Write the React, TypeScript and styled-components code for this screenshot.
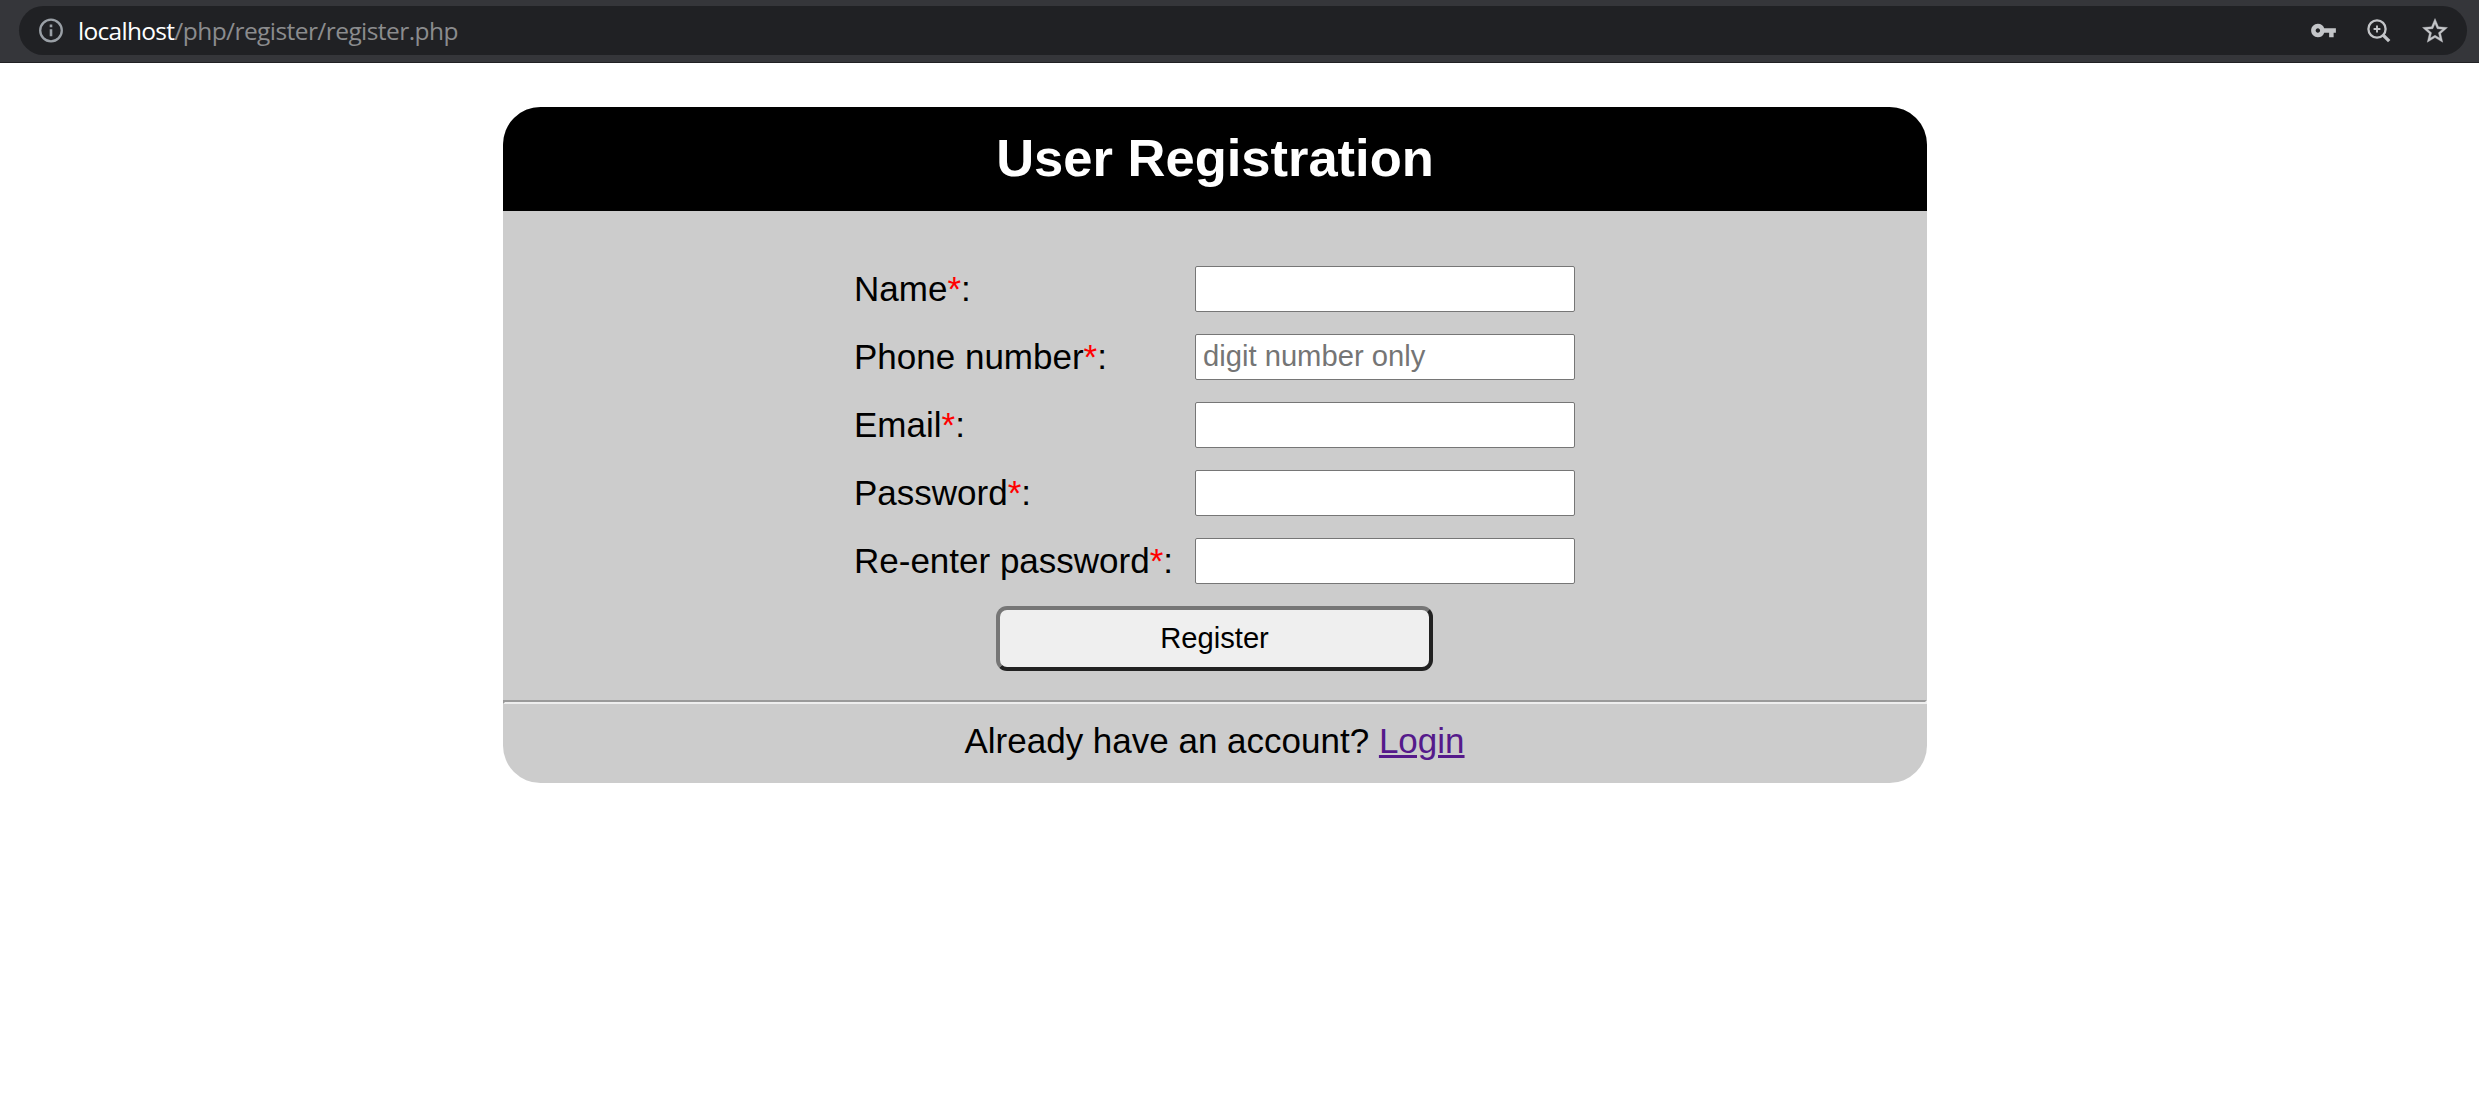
import React from "react";
import styled, { createGlobalStyle } from "styled-components";
import { MdVpnKey } from "react-icons/md";

const GlobalStyle = createGlobalStyle`
  body {
    margin: 0;
    background: #fff;
    color: #000;
    font-family: "Liberation Sans", Arial, sans-serif;
  }
  *, *::before, *::after { box-sizing: border-box; }
`;

const BrowserBar = styled.header`
  height: 63px;
  padding: 6px 12px 0 19px;
  background: #35363a;
  border-bottom: 1px solid #202124;
`;

const AddressField = styled.div`
  display: flex;
  align-items: center;
  height: 49px;
  padding: 0 17px 0 20px;
  border-radius: 25px;
  background: #202124;
  color: #9aa0a6;
`;

const Url = styled.div`
  flex: 1;
  margin-left: 14px;
  font-family: "Open Sans", "Noto Sans", sans-serif;
  font-size: 24.5px;
  line-height: 48px;
  letter-spacing: -0.57px;
  color: #8b8c8e;
`;

const Host = styled.span`
  color: #fff;
  letter-spacing: -0.7px;
`;

const Actions = styled.div`
  display: flex;
  align-items: center;
  color: #c3c5c8;

  svg:nth-child(2) { margin: 0 29px 0 30px; }
`;

const Card = styled.main`
  width: 1424px;
  margin: 44px 0 0 503px;
  border-radius: 37.5px;
  background: #ccc;
  overflow: hidden;
`;

const Title = styled.h1`
  margin: 0;
  height: 104px;
  background: #000;
  color: #fff;
  font-size: 52.5px;
  line-height: 102px;
  text-align: center;
`;

const Form = styled.form`
  display: flex;
  flex-direction: column;
  align-items: center;
  padding: 55px 1px 29px 0;
`;

const Fields = styled.div`
  display: grid;
  grid-template-columns: 341px 380px;
  row-gap: 22px;
`;

const Label = styled.label`
  font-size: 35px;
  line-height: 46px;
  white-space: nowrap;
`;

const Required = styled.span`
  color: #f00;
`;

const Input = styled.input`
  width: 380px;
  height: 46px;
  margin: 0;
  padding: 0 7px 2px;
  border: 1px solid #767676;
  border-radius: 2px;
  background: #fff;
  font: 29.2px "Liberation Sans", Arial, sans-serif;
  outline: none;
  &::placeholder { color: #757575; opacity: 1; }
`;

const Submit = styled.button`
  width: 437px;
  height: 65px;
  margin: 22px 0 0;
  padding: 0;
  border: 4px solid;
  border-color: #767676 #212121 #212121 #767676;
  border-radius: 11px;
  background: #efefef;
  color: #000;
  font: 29.2px "Liberation Sans", Arial, sans-serif;
`;

const Divider = styled.hr`
  margin: 0;
  border: 2px solid;
  border-color: #9a9a9a #eee #eee #9a9a9a;
`;

const Footer = styled.footer`
  height: 79px;
  padding-right: 1px;
  font-size: 35px;
  line-height: 74px;
  text-align: center;
`;

const Link = styled.a`
  color: #551a8b;
  text-decoration: underline;
  text-decoration-thickness: 3px;
`;

const InfoIcon = () => (
  <svg width="25" height="25" viewBox="0 0 25 25" fill="none" stroke="currentColor">
    <circle cx="12" cy="12.5" r="10.8" strokeWidth="2.3" />
    <path d="M12 6.6v2.7M12 11.3v7" strokeWidth="2.6" />
  </svg>
);

const ZoomInIcon = () => (
  <svg width="24" height="24" viewBox="0 0 24 24" fill="none" stroke="currentColor">
    <circle cx="10" cy="10" r="8.6" strokeWidth="2.3" />
    <path d="M6.6 10h6.8M10 6.6v6.8" strokeWidth="1.9" />
    <path d="M15.6 15.6l6.6 6.6" strokeWidth="3.3" />
  </svg>
);

const StarIcon = () => (
  <svg width="30" height="30" viewBox="0 0 24 24" fill="currentColor" stroke="currentColor" strokeWidth="0.3">
    <path d="M22 9.24l-7.19-.62L12 2 9.19 8.63 2 9.24l5.46 4.73L5.82 21 12 17.27 18.18 21l-1.63-7.03L22 9.24zM12 15.4l-3.76 2.27 1-4.28-3.32-2.88 4.38-.38L12 6.1l1.71 4.04 4.38.38-3.32 2.88 1 4.28L12 15.4z" />
  </svg>
);

const fields = [
  { id: "name", label: "Name", type: "text" },
  { id: "phone", label: "Phone number", type: "tel", placeholder: "digit number only" },
  { id: "email", label: "Email", type: "email" },
  { id: "password", label: "Password", type: "password" },
  { id: "repassword", label: "Re-enter password", type: "password" },
];

export default function App() {
  return (
    <>
      <GlobalStyle />
      <BrowserBar>
        <AddressField>
          <InfoIcon />
          <Url>
            <Host>localhost</Host>/php/register/register.php
          </Url>
          <Actions>
            <MdVpnKey size={27} />
            <ZoomInIcon />
            <StarIcon />
          </Actions>
        </AddressField>
      </BrowserBar>
      <Card>
        <Title>User Registration</Title>
        <Form onSubmit={(e) => e.preventDefault()}>
          <Fields>
            {fields.map((f) => (
              <React.Fragment key={f.id}>
                <Label htmlFor={f.id}>
                  {f.label}
                  <Required>*</Required>:
                </Label>
                <Input id={f.id} type={f.type} placeholder={f.placeholder} />
              </React.Fragment>
            ))}
          </Fields>
          <Submit type="submit">Register</Submit>
        </Form>
        <Divider />
        <Footer>
          Already have an account? <Link href="#">Login</Link>
        </Footer>
      </Card>
    </>
  );
}
